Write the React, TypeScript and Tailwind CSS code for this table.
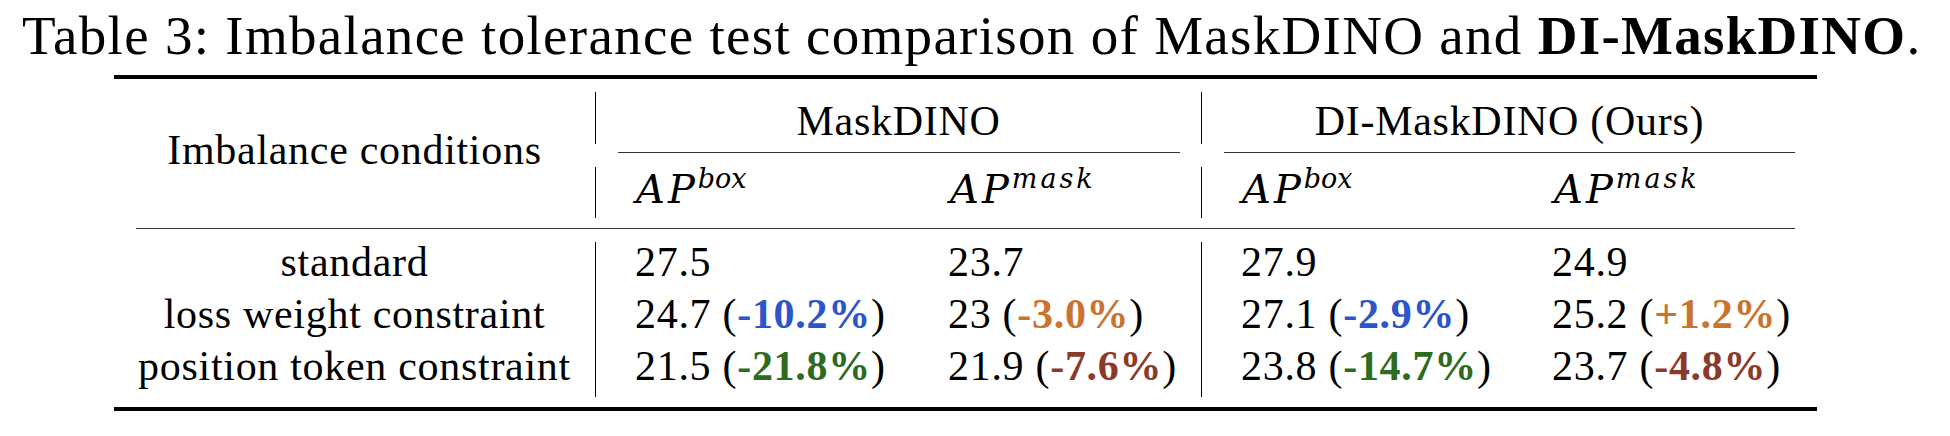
import React from "react";

type Delta = { text: string; color: string };
type Cell = { value: string; delta?: Delta };

const BLUE = "text-[#2b55c8]";
const ORANGE = "text-[#c8742f]";
const GREEN = "text-[#2e6b1f]";
const BROWN = "text-[#8a3a2a]";

const rows: { name: string; cells: Cell[] }[] = [
  {
    name: "standard",
    cells: [{ value: "27.5" }, { value: "23.7" }, { value: "27.9" }, { value: "24.9" }],
  },
  {
    name: "loss weight constraint",
    cells: [
      { value: "24.7", delta: { text: "-10.2%", color: BLUE } },
      { value: "23", delta: { text: "-3.0%", color: ORANGE } },
      { value: "27.1", delta: { text: "-2.9%", color: BLUE } },
      { value: "25.2", delta: { text: "+1.2%", color: ORANGE } },
    ],
  },
  {
    name: "position token constraint",
    cells: [
      { value: "21.5", delta: { text: "-21.8%", color: GREEN } },
      { value: "21.9", delta: { text: "-7.6%", color: BROWN } },
      { value: "23.8", delta: { text: "-14.7%", color: GREEN } },
      { value: "23.7", delta: { text: "-4.8%", color: BROWN } },
    ],
  },
];

// math-style AP^{box} / AP^{mask}
function AP({ sup }: { sup: "box" | "mask" }) {
  return (
    <span className="italic whitespace-nowrap font-['DejaVu_Serif',serif] text-[40px] tracking-[3px]">
      AP
      <span
        className={`relative -top-[15px] text-[27px] leading-none ${
          sup === "mask" ? "tracking-[3px]" : "tracking-normal"
        }`}
      >
        {sup}
      </span>
    </span>
  );
}

function VLine({ cls }: { cls: string }) {
  return <div className={`w-[1px] shrink-0 bg-black ${cls}`} />;
}

function DataCol({ idx, cls }: { idx: number; cls: string }) {
  return (
    <div className={`flex flex-col pt-[7px] ${cls}`}>
      {rows.map((r) => {
        const c = r.cells[idx];
        return (
          <div key={r.name} className="leading-[52px] whitespace-nowrap">
            {c.value}
            {c.delta && (
              <>
                {" ("}
                <span className={`font-bold ${c.delta.color}`}>{c.delta.text}</span>
                {")"}
              </>
            )}
          </div>
        );
      })}
    </div>
  );
}

export default function App() {
  return (
    <div className="w-[1950px] h-[436px] bg-white text-black overflow-hidden font-['Liberation_Serif','DejaVu_Serif',serif]">
      <div className="pt-[6px] pl-[22px] text-[55px] leading-[60px] tracking-[1.3px] whitespace-nowrap">
        Table 3: Imbalance tolerance test comparison of MaskDINO and{" "}
        <b>DI-MaskDINO</b>.
      </div>

      <div className="ml-[114px] mt-[9px] w-[1703px] text-[42px] tracking-[0.7px]">
        <div className="h-[4px] bg-black" />

        {/* header */}
        <div className="flex h-[149px]">
          <div className="w-[481px] pt-[48px] text-center leading-[46px]">Imbalance conditions</div>
          <div className="flex flex-col w-[1222px]">
            <div className="flex h-[73px]">
              <VLine cls="mt-[13px] mb-[8px]" />
              <div className="w-[605px] pt-[19px] text-center leading-[46px]">MaskDINO</div>
              <VLine cls="mt-[13px] mb-[8px]" />
              <div className="w-[615px] pt-[19px] text-center leading-[46px]">DI-MaskDINO (Ours)</div>
            </div>
            <div className="flex h-[1px]">
              <div className="w-[1px]" />
              <div className="w-[605px] pl-[22px] pr-[21px]">
                <div className="h-[1px] bg-[#333]" />
              </div>
              <div className="w-[1px]" />
              <div className="w-[615px] px-[22px]">
                <div className="h-[1px] bg-[#333]" />
              </div>
            </div>
            <div className="flex h-[75px]">
              <VLine cls="mt-[14px] mb-[10px]" />
              <div className="w-[312px] pl-[40px] pt-[13px] leading-[46px]">
                <AP sup="box" />
              </div>
              <div className="w-[293px] pl-[42px] pt-[13px] leading-[46px]">
                <AP sup="mask" />
              </div>
              <VLine cls="mt-[14px] mb-[10px]" />
              <div className="w-[310px] pl-[40px] pt-[13px] leading-[46px]">
                <AP sup="box" />
              </div>
              <div className="w-[305px] pl-[42px] pt-[13px] leading-[46px]">
                <AP sup="mask" />
              </div>
            </div>
          </div>
        </div>

        <div className="mx-[22px] h-[1px] bg-[#333]" />

        {/* body */}
        <div className="flex h-[178px]">
          <div className="w-[481px] flex flex-col pt-[7px] text-center">
            {rows.map((r) => (
              <div key={r.name} className="leading-[52px] whitespace-nowrap">
                {r.name}
              </div>
            ))}
          </div>
          <VLine cls="mt-[13px] mb-[10px]" />
          <DataCol idx={0} cls="w-[312px] pl-[39px]" />
          <DataCol idx={1} cls="w-[293px] pl-[40px]" />
          <VLine cls="mt-[13px] mb-[10px]" />
          <DataCol idx={2} cls="w-[310px] pl-[39px]" />
          <DataCol idx={3} cls="w-[305px] pl-[40px]" />
        </div>

        <div className="h-[4px] bg-black" />
      </div>
    </div>
  );
}
